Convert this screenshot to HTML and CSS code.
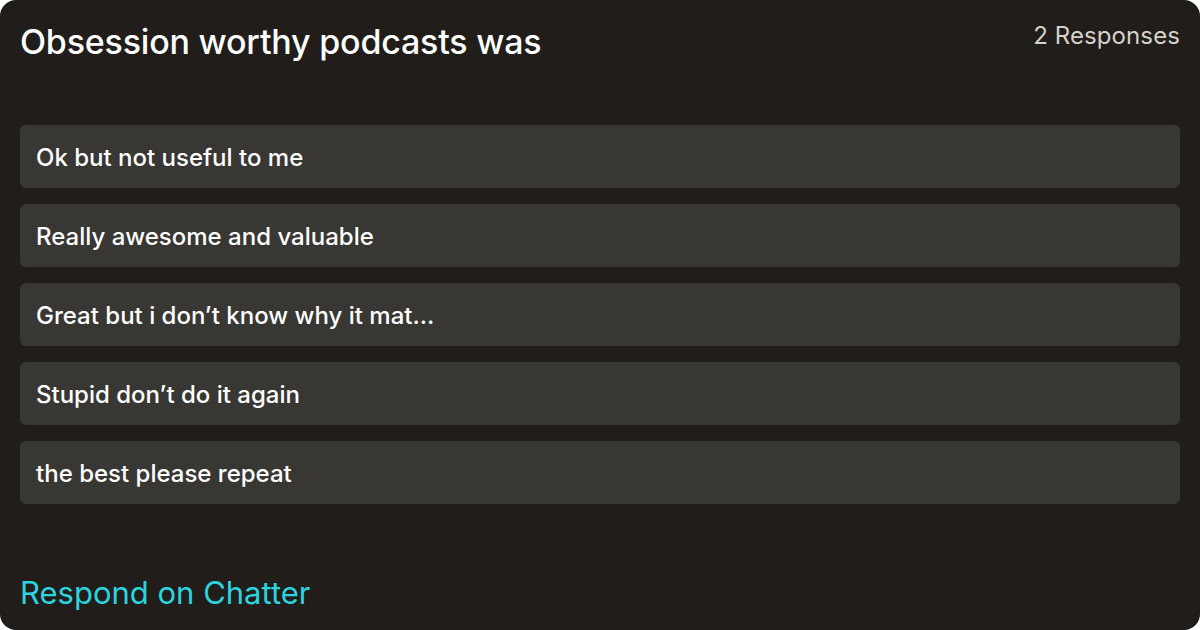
FILE: index.html
```html
<!DOCTYPE html>
<html>
<head>
<meta charset="utf-8">
<link rel="stylesheet" href="styles.css">
</head>
<body>
<div class="card">
  <div class="header">
    <h1 class="title">Obsession worthy podcasts was</h1>
    <div class="count">2 Responses</div>
  </div>
  <div class="options">
    <div class="option">Ok but not useful to me</div>
    <div class="option">Really awesome and valuable</div>
    <div class="option">Great but i don’t know why it mat...</div>
    <div class="option">Stupid don’t do it again</div>
    <div class="option">the best please repeat</div>
  </div>
  <div class="cta">Respond on Chatter</div>
</div>
</body>
</html>
```

FILE: styles.css
```css
html, body {
  margin: 0;
  padding: 0;
  background: #ffffff;
}
body {
  width: 1200px;
  height: 630px;
  overflow: hidden;
  font-family: Inter, "Noto Sans", sans-serif;
}
.card {
  box-sizing: border-box;
  width: 1200px;
  height: 630px;
  background: #201d1b;
  border-radius: 16px;
  padding: 20px 20px 0 20px;
  display: flex;
  flex-direction: column;
}
.header {
  display: flex;
  justify-content: space-between;
  align-items: flex-start;
}
.title {
  margin: 0;
  font-size: 34px;
  font-weight: 500;
  line-height: 44px;
  color: #ffffff;
  letter-spacing: -0.2px;
}
.count {
  font-size: 24px;
  line-height: 32px;
  color: #d6d1c8;
  letter-spacing: 0.1px;
}
.options {
  margin-top: 61px;
  display: flex;
  flex-direction: column;
  gap: 16px;
}
.option {
  height: 63px;
  box-sizing: border-box;
  background: #393734;
  border-radius: 6px;
  padding: 2px 16px 0 16px;
  display: flex;
  align-items: center;
  font-size: 24px;
  font-weight: 500;
  color: #ffffff;
}
.cta {
  margin-top: 69px;
  font-size: 31px;
  line-height: 40px;
  color: #2dd3df;
}
```
